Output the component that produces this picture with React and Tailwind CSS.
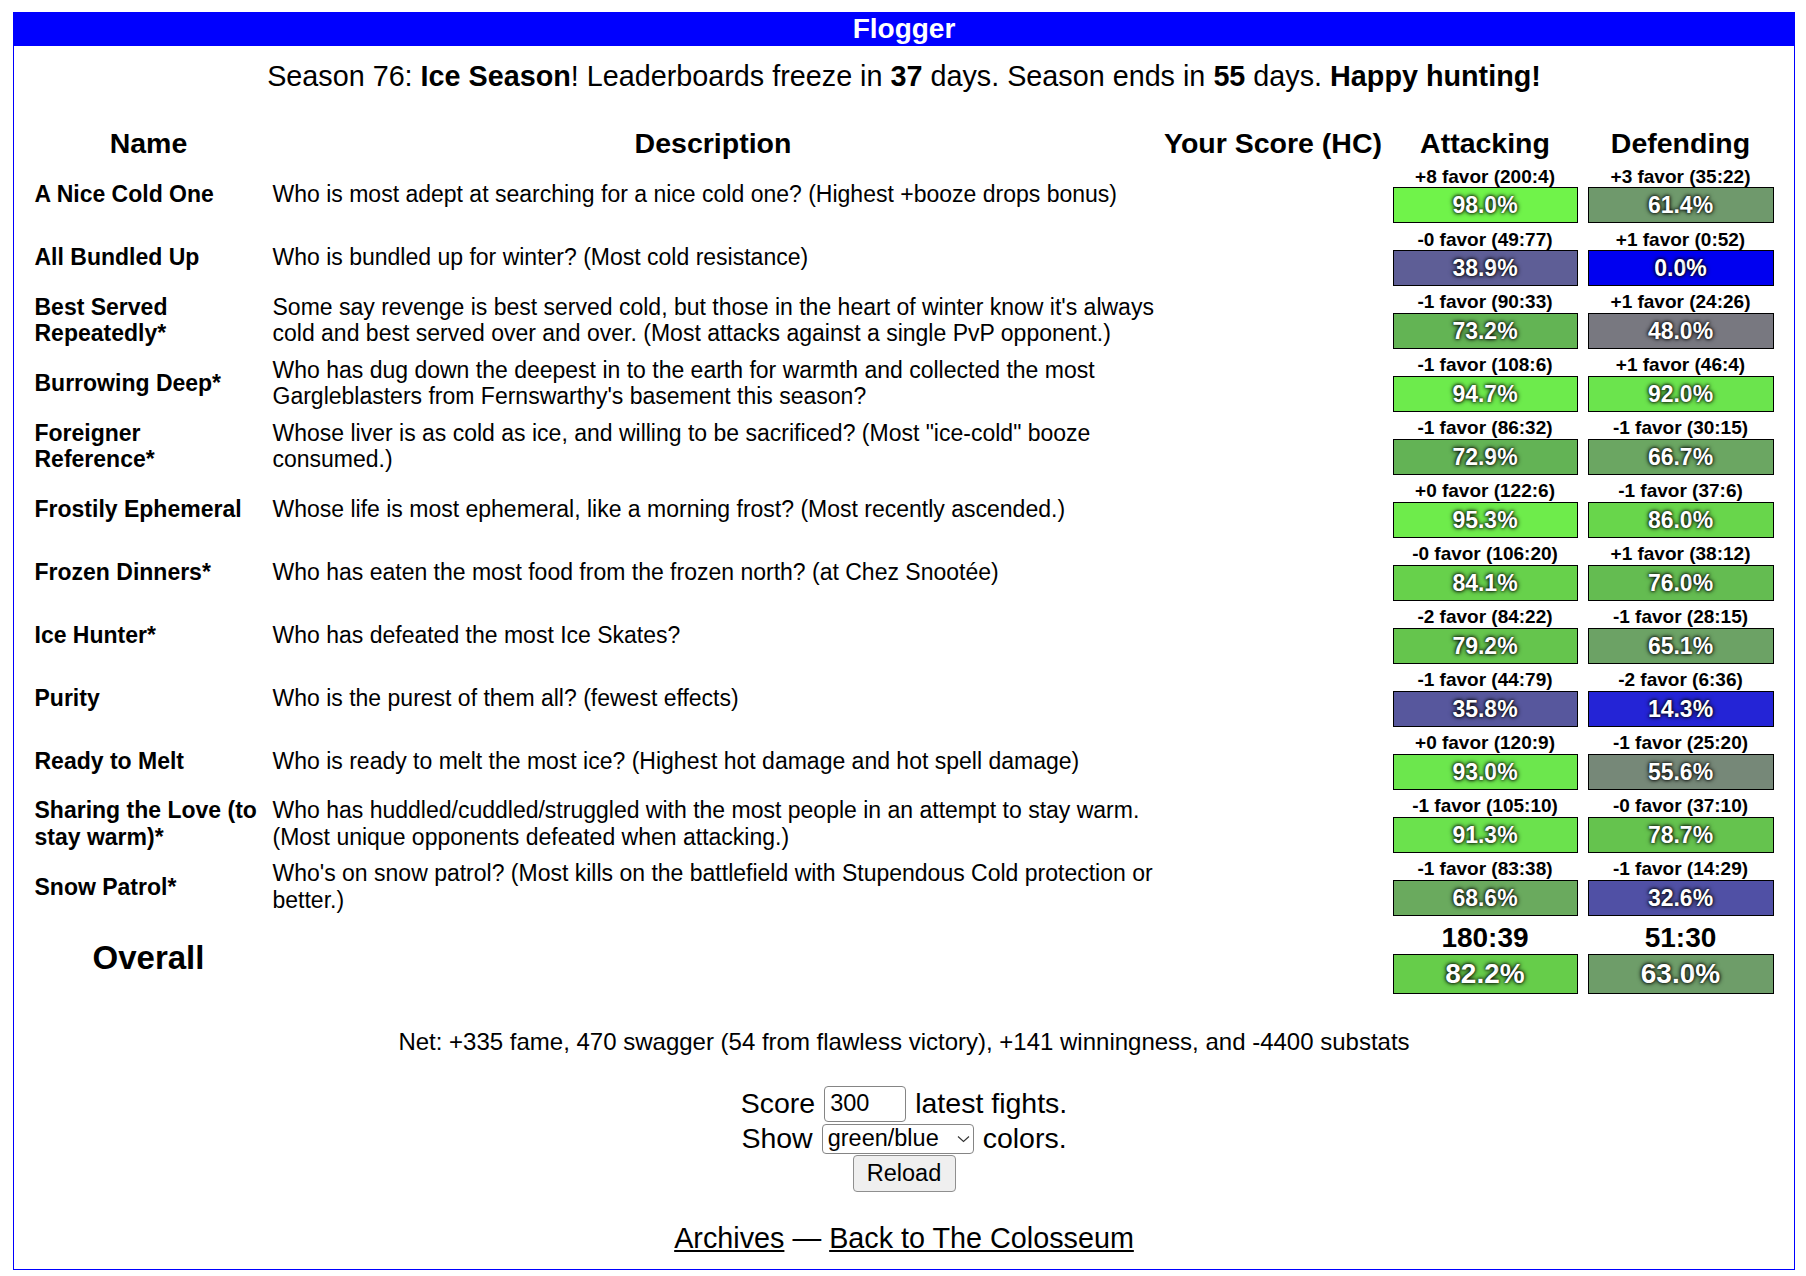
const ANCHORS = [
  [0, [0, 0, 240]],
  [14.3, [36, 36, 214]],
  [32.6, [80, 80, 165]],
  [38.9, [94, 94, 150]],
  [48, [120, 120, 128]],
  [55.6, [118, 136, 120]],
  [61.4, [111, 153, 108]],
  [68.6, [106, 170, 94]],
  [73.2, [99, 180, 84]],
  [82.2, [102, 205, 74]],
  [92, [107, 228, 77]],
  [98, [112, 243, 74]],
  [100, [114, 248, 73]],
];

// colour of a score box, taken from its percentage
function pctColor(p) {
  for (let i = 1; i < ANCHORS.length; i++) {
    const [p1, c1] = ANCHORS[i];
    const [p0, c0] = ANCHORS[i - 1];
    if (p <= p1) {
      const t = (p - p0) / (p1 - p0);
      const c = c0.map((v, k) => Math.round(v + (c1[k] - v) * t));
      return `rgb(${c[0]}, ${c[1]}, ${c[2]})`;
    }
  }
  return "rgb(114, 248, 73)";
}

const rows = [
  {
    name: ["A Nice Cold One"],
    desc: ["Who is most adept at searching for a nice cold one? (Highest +booze drops bonus)"],
    att: ["+8 favor (200:4)", 98.0],
    def: ["+3 favor (35:22)", 61.4],
  },
  {
    name: ["All Bundled Up"],
    desc: ["Who is bundled up for winter? (Most cold resistance)"],
    att: ["-0 favor (49:77)", 38.9],
    def: ["+1 favor (0:52)", 0.0],
  },
  {
    name: ["Best Served", "Repeatedly*"],
    desc: [
      "Some say revenge is best served cold, but those in the heart of winter know it's always",
      "cold and best served over and over. (Most attacks against a single PvP opponent.)",
    ],
    att: ["-1 favor (90:33)", 73.2],
    def: ["+1 favor (24:26)", 48.0],
  },
  {
    name: ["Burrowing Deep*"],
    desc: [
      "Who has dug down the deepest in to the earth for warmth and collected the most",
      "Gargleblasters from Fernswarthy's basement this season?",
    ],
    att: ["-1 favor (108:6)", 94.7],
    def: ["+1 favor (46:4)", 92.0],
  },
  {
    name: ["Foreigner", "Reference*"],
    desc: [
      'Whose liver is as cold as ice, and willing to be sacrificed? (Most "ice-cold" booze',
      "consumed.)",
    ],
    att: ["-1 favor (86:32)", 72.9],
    def: ["-1 favor (30:15)", 66.7],
  },
  {
    name: ["Frostily Ephemeral"],
    desc: ["Whose life is most ephemeral, like a morning frost? (Most recently ascended.)"],
    att: ["+0 favor (122:6)", 95.3],
    def: ["-1 favor (37:6)", 86.0],
  },
  {
    name: ["Frozen Dinners*"],
    desc: ["Who has eaten the most food from the frozen north? (at Chez Snootée)"],
    att: ["-0 favor (106:20)", 84.1],
    def: ["+1 favor (38:12)", 76.0],
  },
  {
    name: ["Ice Hunter*"],
    desc: ["Who has defeated the most Ice Skates?"],
    att: ["-2 favor (84:22)", 79.2],
    def: ["-1 favor (28:15)", 65.1],
  },
  {
    name: ["Purity"],
    desc: ["Who is the purest of them all? (fewest effects)"],
    att: ["-1 favor (44:79)", 35.8],
    def: ["-2 favor (6:36)", 14.3],
  },
  {
    name: ["Ready to Melt"],
    desc: ["Who is ready to melt the most ice? (Highest hot damage and hot spell damage)"],
    att: ["+0 favor (120:9)", 93.0],
    def: ["-1 favor (25:20)", 55.6],
  },
  {
    name: ["Sharing the Love (to", "stay warm)*"],
    desc: [
      "Who has huddled/cuddled/struggled with the most people in an attempt to stay warm.",
      "(Most unique opponents defeated when attacking.)",
    ],
    att: ["-1 favor (105:10)", 91.3],
    def: ["-0 favor (37:10)", 78.7],
  },
  {
    name: ["Snow Patrol*"],
    desc: [
      "Who's on snow patrol? (Most kills on the battlefield with Stupendous Cold protection or",
      "better.)",
    ],
    att: ["-1 favor (83:38)", 68.6],
    def: ["-1 favor (14:29)", 32.6],
  },
];

function Lines({ lines }) {
  return lines.map((l, i) => (
    <span key={i} className="block">
      {l}
    </span>
  ));
}

function ScoreCell({ label, pct, big }) {
  return (
    <div className="flex flex-col">
      <div
        className={
          big
            ? "text-center text-[28px] font-bold leading-[32px]"
            : "text-center text-[19px] font-bold leading-[21.85px]"
        }
      >
        {label}
      </div>
      <div
        className={`flex items-center justify-center border border-black font-bold text-white [text-shadow:0_0_3px_#000,0_0_5px_#000] ${
          big ? "h-[40px] text-[28px] leading-[32px]" : "h-[36px] text-[23px] leading-[26px]"
        }`}
        style={{ backgroundColor: pctColor(pct) }}
      >
        {pct.toFixed(1)}%
      </div>
    </div>
  );
}

export default function App() {
  return (
    <div className="min-h-screen bg-white pt-[12px] font-['Liberation_Sans',Arial,Helvetica,sans-serif] leading-normal text-black">
      <div className="ml-[13px] w-[1782px]">
        <div className="h-[34px] bg-[#0000ff] text-center text-[28px] font-bold leading-[34px] text-white">
          Flogger
        </div>
        <div className="border border-t-0 border-[#0000ff] pb-[14px] pt-[14px]">
          <p className="text-center text-[28.75px] leading-[33px]">
            Season 76: <b>Ice Season</b>! Leaderboards freeze in <b>37</b> days. Season ends in{" "}
            <b>55</b> days. <b>Happy hunting!</b>
          </p>

          <div className="mx-auto mt-[34px] grid w-fit grid-cols-[228px_881px_219px_185px_186px] gap-x-[10px] gap-y-[5.1px]">
            <div className="mb-[0.5px] text-center text-[28.5px] font-bold leading-[33px]">Name</div>
            <div className="mb-[0.5px] text-center text-[28.5px] font-bold leading-[33px]">Description</div>
            <div className="mb-[0.5px] whitespace-nowrap text-center text-[28.5px] font-bold leading-[33px]">
              Your Score (HC)
            </div>
            <div className="mb-[0.5px] text-center text-[28.5px] font-bold leading-[33px]">Attacking</div>
            <div className="mb-[0.5px] text-center text-[28.5px] font-bold leading-[33px]">Defending</div>

            {rows.map((r) => (
              <div key={r.name.join(" ")} className="contents">
                <div className="self-center whitespace-nowrap text-[23px] font-bold leading-[26.5px]">
                  <Lines lines={r.name} />
                </div>
                <div className="self-center whitespace-nowrap text-[23px] leading-[26.5px]">
                  <Lines lines={r.desc} />
                </div>
                <div />
                <ScoreCell label={r.att[0]} pct={r.att[1]} />
                <ScoreCell label={r.def[0]} pct={r.def[1]} />
              </div>
            ))}

            <div className="mt-[1px] self-center text-center text-[33px] font-bold leading-[38px]">Overall</div>
            <div />
            <div />
            <div className="mt-[1px]">
              <ScoreCell label="180:39" pct={82.2} big />
            </div>
            <div className="mt-[1px]">
              <ScoreCell label="51:30" pct={63.0} big />
            </div>
          </div>

          <p className="mt-[34px] text-center text-[24px] leading-[27.5px]">
            Net: +335 fame, 470 swagger (54 from flawless victory), +141 winningness, and -4400 substats
          </p>

          <div className="mt-[30px] flex flex-col items-center text-[28.5px] leading-[33px]">
            <div className="flex h-[37px] items-center gap-[9px]">
              <span>Score</span>
              <input
                defaultValue="300"
                className="h-[36px] w-[82px] rounded-[4px] border border-[#858585] bg-white pl-[5px] text-[23.5px] outline-none"
              />
              <span>latest fights.</span>
            </div>
            <div className="flex h-[33px] items-center gap-[9px]">
              <span>Show</span>
              <div className="relative flex h-[30px] w-[152px] items-center rounded-[4px] border border-[#858585] bg-white pl-[5px] text-[23.5px] leading-[27px]">
                green/blue
                <svg
                  className="absolute right-[3px] top-1/2 -translate-y-1/2"
                  width="13"
                  height="8"
                  viewBox="0 0 13 8"
                  fill="none"
                >
                  <polyline points="1,1.5 6.5,6.5 12,1.5" stroke="#333" strokeWidth="1.1" />
                </svg>
              </div>
              <span>colors.</span>
            </div>
            <button className="h-[37px] w-[103px] rounded-[4px] border border-[#8f8f8f] bg-[#efefef] text-[23.5px] leading-[27px]">
              Reload
            </button>
          </div>

          <p className="mt-[30px] text-center text-[28.75px] leading-[33px]">
            <a href="#" className="underline">
              Archives
            </a>{" "}
            —{" "}
            <a href="#" className="underline">
              Back to The Colosseum
            </a>
          </p>
        </div>
      </div>
    </div>
  );
}
